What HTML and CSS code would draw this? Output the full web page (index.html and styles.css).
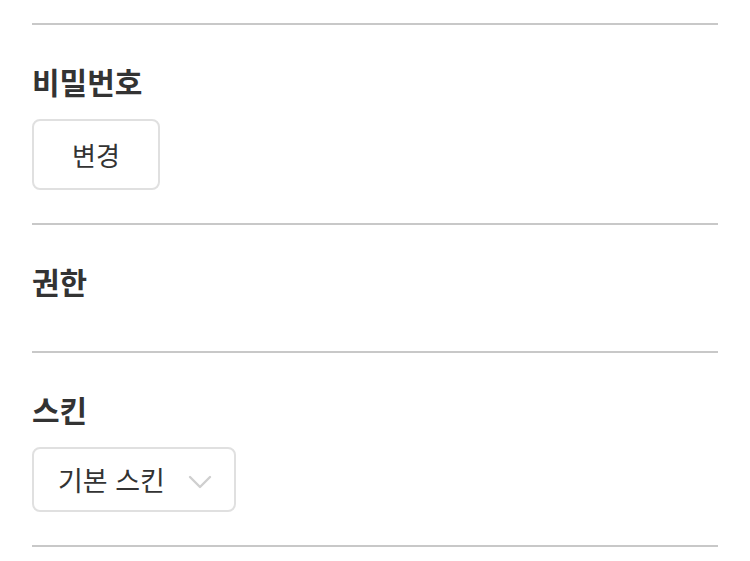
FILE: index.html
```html
<!DOCTYPE html>
<html lang="ko">
<head>
    <meta charset="UTF-8">
    <meta name="viewport" content="width=device-width, initial-scale=1.0">
    <title>설정</title>
    <link rel="stylesheet" href="styles.css">
</head>
<body>

    <!-- Settings -->
    <div class="settings">

        <!-- 비밀번호 -->
        <section class="setting-item">
            <h3 class="setting-title">비밀번호</h3>
            <button class="setting-button">변경</button>
        </section>

        <!-- 권한 -->
        <section class="setting-item setting-item-empty">
            <h3 class="setting-title">권한</h3>
        </section>

        <!-- 스킨 -->
        <section class="setting-item">
            <h3 class="setting-title">스킨</h3>
            <div class="setting-select">
                <span>기본 스킨</span>
                <svg class="select-arrow" width="24" height="14" viewBox="0 0 24 14">
                    <path d="M2 2 L12 12 L22 2" fill="none" stroke="#cfcfcf" stroke-width="2.4" stroke-linecap="round" stroke-linejoin="round"/>
                </svg>
            </div>
        </section>

    </div>

</body>
</html>
```

FILE: styles.css
```css
* {
    margin: 0;
    padding: 0;
    box-sizing: border-box;
}

body {
    font-family: 'Noto Sans CJK KR', 'Noto Sans', sans-serif;
    background-color: #fff;
    color: #333;
    padding: 23px 32px 0 32px;
}

/* Settings */
.settings {
    border-bottom: 2px solid #c8c8c8;
}

.setting-item {
    border-top: 2px solid #c8c8c8;
    padding: 36px 0 33px 0;
}

.setting-item-empty {
    padding-bottom: 32px;
}

.setting-title {
    font-size: 30px;
    font-weight: 700;
    line-height: 40px;
    color: #333;
    margin-bottom: 18px;
}

.setting-button {
    font-family: inherit;
    display: block;
    width: 128px;
    height: 71px;
    background-color: #fff;
    border: 2px solid #e0e0e0;
    border-radius: 8px;
    font-size: 26px;
    color: #333;
}

.setting-select {
    display: flex;
    align-items: center;
    width: 204px;
    height: 65px;
    padding: 0 22px 0 24px;
    border: 2px solid #e0e0e0;
    border-radius: 8px;
    font-size: 27px;
    color: #333;
}

.setting-select span {
    flex: 1;
}

.select-arrow {
    margin-top: 4px;
}
```
